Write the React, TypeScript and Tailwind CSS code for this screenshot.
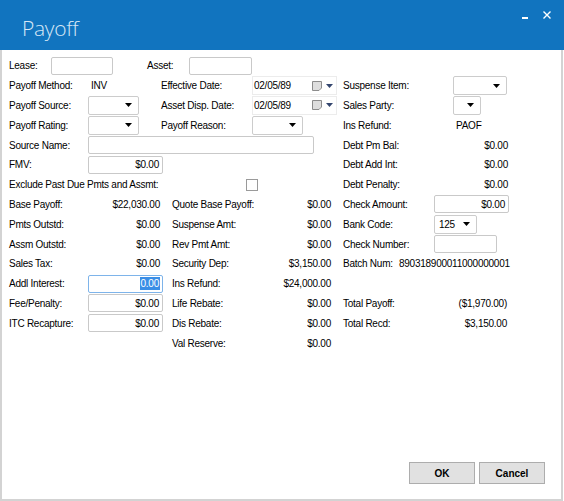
import React from 'react';

type Kids = { children?: React.ReactNode };

function Row({ children }: Kids) {
  return <div className="flex h-[19.8px] shrink-0 items-center">{children}</div>;
}

function Lbl({ w, children }: { w: string } & Kids) {
  return <span className={`${w} shrink-0 whitespace-nowrap`}>{children}</span>;
}

function Amt({ w, children }: { w: string } & Kids) {
  return <span className={`${w} shrink-0 whitespace-nowrap pr-[3px] text-right`}>{children}</span>;
}

function Gap({ w }: { w: string }) {
  return <span className={`${w} shrink-0`} />;
}

function Arrow({ color = '#000' }: { color?: string }) {
  return (
    <svg width="7" height="4" viewBox="0 0 7 4" className="shrink-0">
      <polygon points="0,0 7,0 3.5,4" fill={color} />
    </svg>
  );
}

function TextBox({ w, children }: { w: string } & Kids) {
  return (
    <div className={`${w} flex h-[18px] shrink-0 items-center justify-end rounded-[2px] border border-[#c9c9c9] bg-white px-[3px]`}>
      {children}
    </div>
  );
}

function Combo({ w, value }: { w: string; value?: string }) {
  return (
    <div className={`${w} flex h-[19px] shrink-0 items-center justify-between rounded-[2px] border border-[#cccccc] bg-white pl-[4px] pr-[6px]`}>
      <span>{value}</span>
      <Arrow />
    </div>
  );
}

function DateBox({ value }: { value: string }) {
  return (
    <div className="flex h-[19px] w-[85px] shrink-0 items-center border border-[#ececec] pl-[1px] pr-[3px]">
      <span className="flex-1">{value}</span>
      <svg width="10" height="10" viewBox="0 0 10 10" className="mr-[4px] shrink-0">
        <path d="M0.5 0.5 H9.5 V7 L7 9.5 H0.5 Z" fill="#dedede" stroke="#8c8c8c" />
      </svg>
      <Arrow color="#34466e" />
    </div>
  );
}

export default function App() {
  return (
    <div className="h-[501px] w-[564px] bg-white font-['Liberation_Sans',Arial,sans-serif] text-black">
      <div className="flex h-[50px] items-start justify-between bg-[#1174bf] pl-[22px] pt-[15px] pr-[13px]">
        <span className="font-['Open_Sans',sans-serif] text-[21px] font-light leading-[26px] tracking-[-0.3px] text-[#d7e7f6]">
          Payoff
        </span>
        <div className="flex items-start gap-[15px] text-white">
          <span className="mt-[2px] block h-[2px] w-[6px] bg-white" />
          <svg width="8" height="8" viewBox="0 0 8 8" className="-mt-[4px]">
            <path d="M0.5 0.5 L7.5 7.5 M7.5 0.5 L0.5 7.5" stroke="#fff" strokeWidth="1.4" />
          </svg>
        </div>
      </div>

      <div className="flex h-[451px] w-[563px] flex-col border-x-2 border-b-2 border-[#d3d3d3] pl-[7px] pr-[16px] pt-[6px] pb-[15px] text-[10px] tracking-[-0.25px]">
        <Row>
          <Lbl w="w-[42px]">Lease:</Lbl>
          <TextBox w="w-[62px]" />
          <Gap w="w-[34px]" />
          <Lbl w="w-[42px]">Asset:</Lbl>
          <TextBox w="w-[63px]" />
        </Row>
        <Row>
          <Lbl w="w-[82px]">Payoff Method:</Lbl>
          <Lbl w="w-[70px]">INV</Lbl>
          <Lbl w="w-[91px]">Effective Date:</Lbl>
          <DateBox value="02/05/89" />
          <Gap w="w-[6px]" />
          <Lbl w="w-[110px]">Suspense Item:</Lbl>
          <Combo w="w-[54px]" />
        </Row>
        <Row>
          <Lbl w="w-[79px]">Payoff Source:</Lbl>
          <Combo w="w-[51px]" />
          <Gap w="w-[22px]" />
          <Lbl w="w-[91px]">Asset Disp. Date:</Lbl>
          <DateBox value="02/05/89" />
          <Gap w="w-[6px]" />
          <Lbl w="w-[110px]">Sales Party:</Lbl>
          <Combo w="w-[28px]" />
        </Row>
        <Row>
          <Lbl w="w-[79px]">Payoff Rating:</Lbl>
          <Combo w="w-[51px]" />
          <Gap w="w-[22px]" />
          <Lbl w="w-[91px]">Payoff Reason:</Lbl>
          <Combo w="w-[51px]" />
          <Gap w="w-[40px]" />
          <Lbl w="w-[113px]">Ins Refund:</Lbl>
          <Lbl w="w-[40px]">PAOF</Lbl>
        </Row>
        <Row>
          <Lbl w="w-[79px]">Source Name:</Lbl>
          <TextBox w="w-[226px]" />
          <Gap w="w-[29px]" />
          <Lbl w="w-[110px]">Debt Pm Bal:</Lbl>
          <Amt w="w-[58px]">$0.00</Amt>
        </Row>
        <Row>
          <Lbl w="w-[79px]">FMV:</Lbl>
          <TextBox w="w-[75px]">$0.00</TextBox>
          <Gap w="w-[180px]" />
          <Lbl w="w-[110px]">Debt Add Int:</Lbl>
          <Amt w="w-[58px]">$0.00</Amt>
        </Row>
        <Row>
          <Lbl w="w-[237px]">Exclude Past Due Pmts and Assmt:</Lbl>
          <span className="h-[12px] w-[12px] shrink-0 border border-[#9a9a9a] bg-white" />
          <Gap w="w-[85px]" />
          <Lbl w="w-[110px]">Debt Penalty:</Lbl>
          <Amt w="w-[58px]">$0.00</Amt>
        </Row>

        <Row>
          <Lbl w="w-[79px]">Base Payoff:</Lbl>
          <Amt w="w-[75px]">$22,030.00</Amt>
          <Gap w="w-[9px]" />
          <Lbl w="w-[100px]">Quote Base Payoff:</Lbl>
          <Amt w="w-[62px]">$0.00</Amt>
          <Gap w="w-[9px]" />
          <Lbl w="w-[91px]">Check Amount:</Lbl>
          <TextBox w="w-[75px]">$0.00</TextBox>
        </Row>
        <Row>
          <Lbl w="w-[79px]">Pmts Outstd:</Lbl>
          <Amt w="w-[75px]">$0.00</Amt>
          <Gap w="w-[9px]" />
          <Lbl w="w-[100px]">Suspense Amt:</Lbl>
          <Amt w="w-[62px]">$0.00</Amt>
          <Gap w="w-[9px]" />
          <Lbl w="w-[91px]">Bank Code:</Lbl>
          <Combo w="w-[43px]" value="125" />
        </Row>
        <Row>
          <Lbl w="w-[79px]">Assm Outstd:</Lbl>
          <Amt w="w-[75px]">$0.00</Amt>
          <Gap w="w-[9px]" />
          <Lbl w="w-[100px]">Rev Pmt Amt:</Lbl>
          <Amt w="w-[62px]">$0.00</Amt>
          <Gap w="w-[9px]" />
          <Lbl w="w-[91px]">Check Number:</Lbl>
          <TextBox w="w-[63px]" />
        </Row>
        <Row>
          <Lbl w="w-[79px]">Sales Tax:</Lbl>
          <Amt w="w-[75px]">$0.00</Amt>
          <Gap w="w-[9px]" />
          <Lbl w="w-[100px]">Security Dep:</Lbl>
          <Amt w="w-[62px]">$3,150.00</Amt>
          <Gap w="w-[9px]" />
          <Lbl w="w-[56px]">Batch Num:</Lbl>
          <Lbl w="w-[120px]">890318900011000000001</Lbl>
        </Row>
        <Row>
          <Lbl w="w-[79px]">Addl Interest:</Lbl>
          <div className="flex h-[18px] w-[75px] shrink-0 items-center justify-end rounded-[2px] border border-[#7eb4ea] bg-white px-[2px]">
            <span className="bg-[#3a8ee6] px-[1px] leading-[13px] text-white">0.00</span>
          </div>
          <Gap w="w-[9px]" />
          <Lbl w="w-[100px]">Ins Refund:</Lbl>
          <Amt w="w-[62px]">$24,000.00</Amt>
        </Row>
        <Row>
          <Lbl w="w-[79px]">Fee/Penalty:</Lbl>
          <TextBox w="w-[75px]">$0.00</TextBox>
          <Gap w="w-[9px]" />
          <Lbl w="w-[100px]">Life Rebate:</Lbl>
          <Amt w="w-[62px]">$0.00</Amt>
          <Gap w="w-[9px]" />
          <Lbl w="w-[110px]">Total Payoff:</Lbl>
          <Amt w="w-[57px]">($1,970.00)</Amt>
        </Row>
        <Row>
          <Lbl w="w-[79px]">ITC Recapture:</Lbl>
          <TextBox w="w-[75px]">$0.00</TextBox>
          <Gap w="w-[9px]" />
          <Lbl w="w-[100px]">Dis Rebate:</Lbl>
          <Amt w="w-[62px]">$0.00</Amt>
          <Gap w="w-[9px]" />
          <Lbl w="w-[110px]">Total Recd:</Lbl>
          <Amt w="w-[57px]">$3,150.00</Amt>
        </Row>
        <Row>
          <Gap w="w-[163px]" />
          <Lbl w="w-[100px]">Val Reserve:</Lbl>
          <Amt w="w-[62px]">$0.00</Amt>
        </Row>

        <div className="mt-auto flex justify-end gap-[4px]">
          <button className="h-[22px] w-[66px] border border-[#adadad] bg-[#e1e1e1] text-[10px] font-bold tracking-normal">
            OK
          </button>
          <button className="h-[22px] w-[66px] border border-[#adadad] bg-[#e1e1e1] text-[10px] font-bold tracking-normal">
            Cancel
          </button>
        </div>
      </div>
    </div>
  );
}
